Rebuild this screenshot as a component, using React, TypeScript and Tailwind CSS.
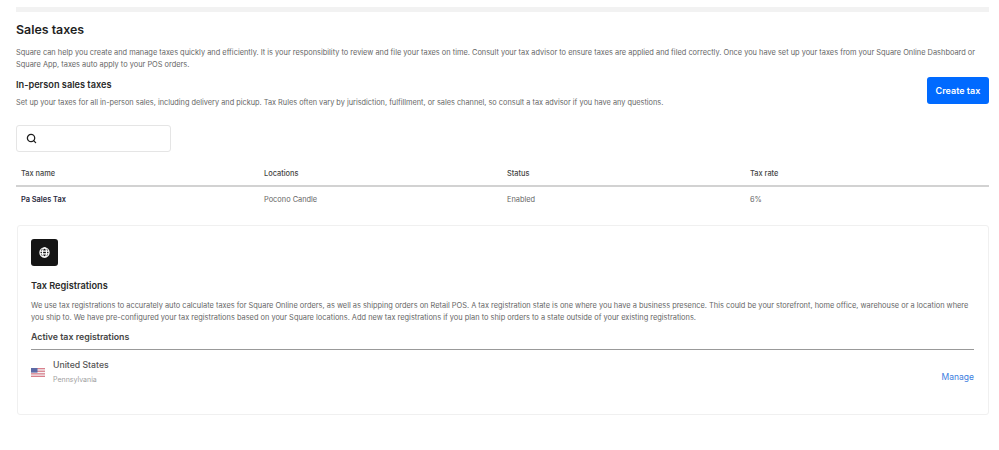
import { Search } from "lucide-react"

const columns = ["Tax name", "Locations", "Status", "Tax rate"]

const UsFlag = () => (
  <svg width="14" height="9" viewBox="0 0 14 9" className="shrink-0">
    <rect width="14" height="9" fill="#f4f4f6" />
    <rect width="14" height="1.3" fill="#d9808c" />
    <rect y="2.6" width="14" height="1.3" fill="#d9808c" />
    <rect y="5.2" width="14" height="1.3" fill="#d9808c" />
    <rect y="7.7" width="14" height="1.3" fill="#d9808c" />
    <rect width="6.5" height="4.6" fill="#5d6aa6" />
  </svg>
)

const GlobeIcon = () => (
  <svg width="11" height="11" viewBox="0 0 12 12" fill="none" stroke="white" strokeWidth="1.3">
    <circle cx="6" cy="6" r="5" />
    <ellipse cx="6" cy="6" rx="2.2" ry="5" />
    <path d="M1 4.4h10M1 7.6h10" />
  </svg>
)

export default function App() {
  return (
    <div className="h-[450px] w-[999px] bg-white pl-4 pr-2.5 pt-[7px] font-['Inter',sans-serif] text-[#666]">
      <div className="h-[5px] bg-[#f2f2f2]" />

      <h1 className="mt-[9px] text-[12.4px] leading-[18px] font-semibold text-[#1f1f1f]">Sales taxes</h1>
      <p className="mt-2 text-[7.42px] leading-3">
        Square can help you create and manage taxes quickly and efficiently. It is your responsibility to review and file your taxes on time. Consult your tax advisor to ensure taxes are applied and filed correctly. Once you have set up your taxes from your Square Online Dashboard or Square App, taxes auto apply to your POS orders.
      </p>

      <div className="mt-1.5 flex items-start justify-between">
        <div>
          <h2 className="mt-px text-[9.2px] leading-[14px] font-semibold text-[#2a2a2a]">In-person sales taxes</h2>
          <p className="mt-[5px] text-[7.35px] leading-3">
            Set up your taxes for all in-person sales, including delivery and pickup. Tax Rules often vary by jurisdiction, fulfillment, or sales channel, so consult a tax advisor if you have any questions.
          </p>
        </div>
        <button className="h-[27px] w-[62px] rounded-[3px] bg-[#006aff] text-[9px] font-semibold text-white">Create tax</button>
      </div>

      <div className="mt-4 flex h-[27px] w-[155px] items-center rounded-[3px] border border-[#e5e5e5] pl-[9px]">
        <Search className="size-[11px] text-[#1f1f1f]" strokeWidth={2.8} />
      </div>

      <div className="mt-[13px] grid h-[22px] grid-cols-[243px_243px_243px_1fr] items-center border-b-2 border-[#d2d2d2] pb-[3px] pl-[5px] text-[7.4px] font-medium text-[#444]">
        {columns.map((c) => (
          <span key={c}>{c}</span>
        ))}
      </div>
      <div className="grid h-[26px] grid-cols-[243px_243px_243px_1fr] items-center pl-[5px] text-[7.4px]">
        <span className="font-semibold text-[#2a2a40]">Pa Sales Tax</span>
        <span>Pocono Candle</span>
        <span>Enabled</span>
        <span>6%</span>
      </div>

      <section className="mt-3 ml-px h-[190px] rounded-[3px] border border-[#f0f0f0] pl-[13px] pr-[14px] pt-[13px]">
        <div className="flex size-[27px] items-center justify-center rounded-[3px] bg-[#151515]">
          <GlobeIcon />
        </div>
        <h2 className="mt-[13px] text-[9.2px] leading-[14px] font-semibold text-[#2a2a2a]">Tax Registrations</h2>
        <p className="mt-[7px] text-[7.42px] leading-3">
          We use tax registrations to accurately auto calculate taxes for Square Online orders, as well as shipping orders on Retail POS. A tax registration state is one where you have a business presence. This could be your storefront, home office, warehouse or a location where you ship to. We have pre-configured your tax registrations based on your Square locations. Add new tax registrations if you plan to ship orders to a state outside of your existing registrations.
        </p>
        <h3 className="mt-1.5 border-b border-[#999] pb-[5px] text-[8.8px] leading-[14px] font-semibold text-[#444]">Active tax registrations</h3>
        <div className="flex items-center justify-between pt-[9px]">
          <div className="flex items-center gap-2">
            <UsFlag />
            <div>
              <p className="text-[8.7px] leading-3 font-medium text-[#555]">United States</p>
              <p className="mt-[3px] text-[7px] leading-3 text-[#a0a0a0]">Pennsylvania</p>
            </div>
          </div>
          <a className="mt-[9px] text-[8.5px] text-[#3b7de0]">Manage</a>
        </div>
      </section>
    </div>
  )
}
